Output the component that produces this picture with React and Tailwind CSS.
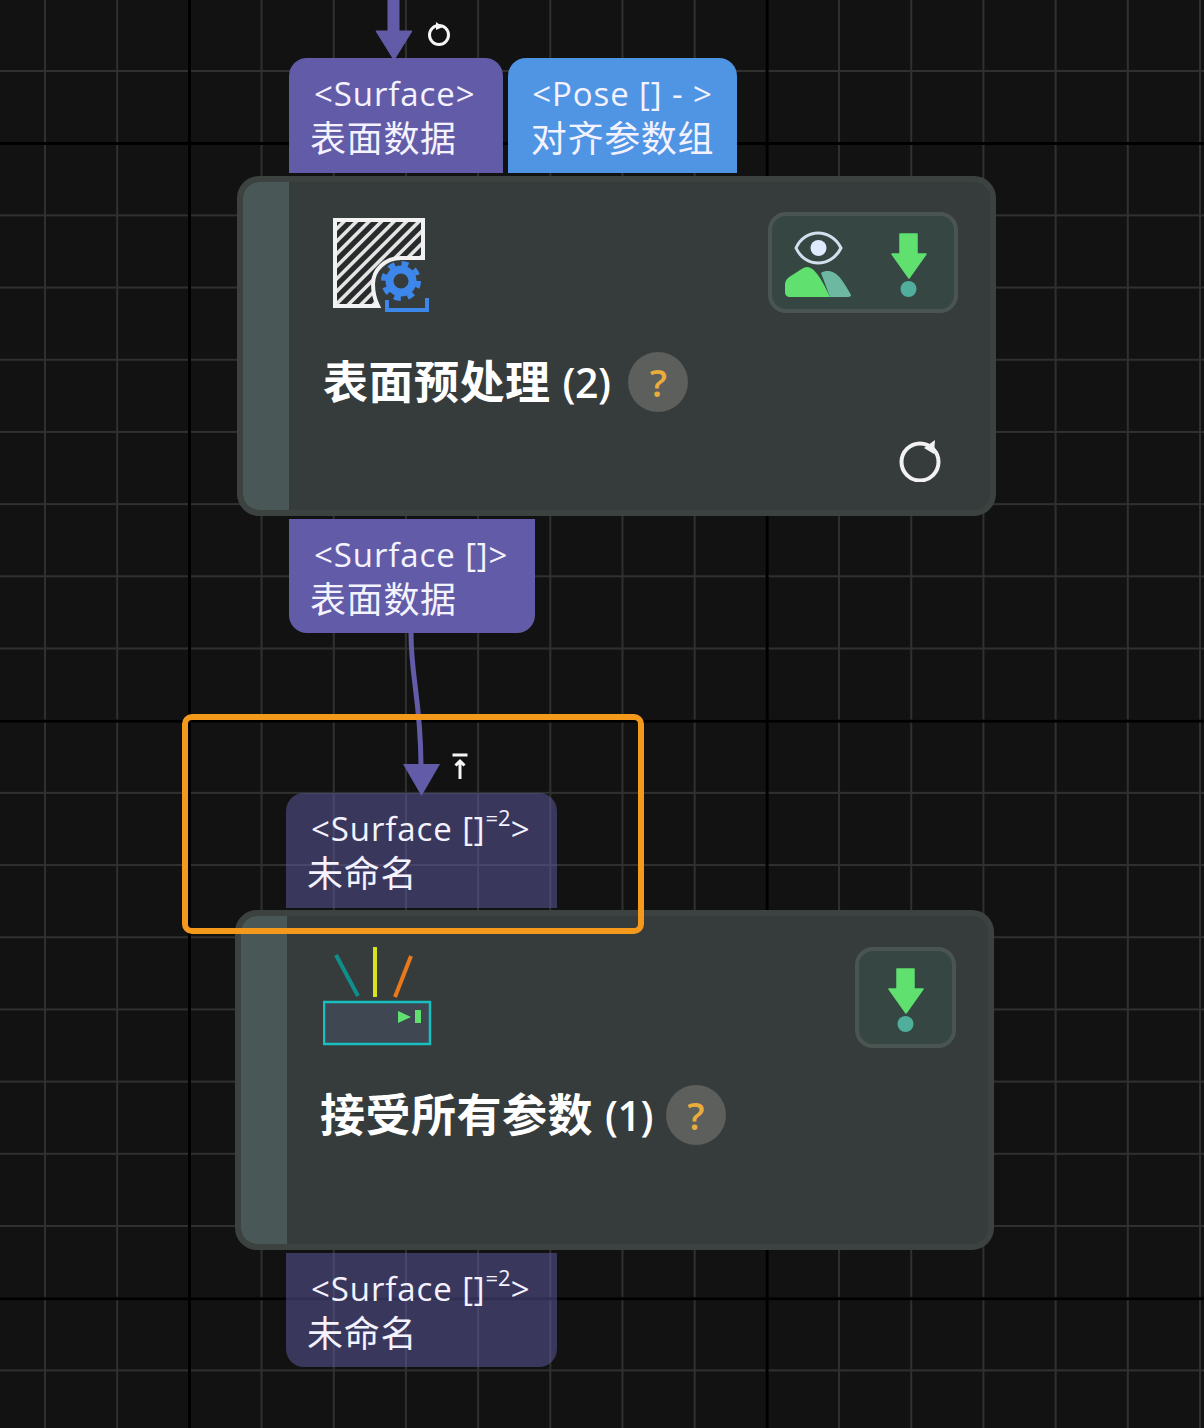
import React from 'react';

const FONT = "font-['Open_Sans','Noto_Sans_CJK_SC',sans-serif]";

function Port({ className, type, name, centered }) {
  return (
    <div className={`pt-[13px] text-[#f4f2ff] ${className}`}>
      <div className={`text-[33px] leading-[46px] tracking-[0.9px] whitespace-nowrap ${centered ? 'text-center' : 'pl-[25px]'}`}>{type}</div>
      <div className={`text-[36px] leading-[44px] tracking-[0.7px] whitespace-nowrap ${centered ? 'text-center' : 'pl-[21px]'}`}>{name}</div>
    </div>
  );
}

function Power() {
  return <sup className="relative top-[-15px] text-[22px] leading-none font-medium tracking-normal align-baseline">=2</sup>;
}

function DownArrow() {
  return (
    <svg width="36" height="70" viewBox="0 -6 36 70">
      <path d="M9 0H26V20H35L18 44L1 20H9Z" fill="#5fe06f" stroke="#5fe06f" strokeWidth="1.5" strokeLinejoin="round" />
      <circle cx="17.5" cy="55" r="8" fill="#4fae9c" />
    </svg>
  );
}

function EyePerson() {
  return (
    <svg width="66" height="71" viewBox="0 0 66 71">
      <path d="M11 21C20 1 46 1 56 21C46 41 20 41 11 21Z" fill="none" stroke="#d3deee" strokeWidth="3" />
      <circle cx="33.500" cy="21" r="8" fill="#dfeaff" />
      <path d="M36 46C42 42 50 44 56 52C60 57 63 63 66 68C66 69 65 70 63 70H45Z" fill="#6cb8a0" />
      <path d="M0 58C0 52 4 50 9 47C14 44 18 40 22 40C27 40 31 45 35 51C39 57 42 64 45 70H5C2 70 0 68 0 65Z" fill="#5fe06f" />
    </svg>
  );
}

function SurfaceIcon() {
  const outline = 'M2 2H90V40H68C52 40 40 52 40 66C40 74 42 82 45 88H2Z';
  const hatch = [];
  for (let i = -90; i < 110; i += 12.5) hatch.push(i);
  return (
    <svg width="100" height="96" viewBox="0 0 100 96" className="block">
      <defs>
        <clipPath id="hatch-clip">
          <path d={outline} />
        </clipPath>
      </defs>
      <path d={outline} fill="#282b2b" />
      <g clipPath="url(#hatch-clip)">
        {hatch.map((x) => (
          <line key={x} x1={x} y1="92" x2={x + 92} y2="0" stroke="#e4e4e4" strokeWidth="3.500" />
        ))}
      </g>
      <path d={outline} fill="none" stroke="#f2f2f2" strokeWidth="4" />
      <circle cx="68" cy="63" r="11.500" fill="none" stroke="#3d86ea" strokeWidth="8" />
      <circle cx="68" cy="63" r="17.500" fill="none" stroke="#3d86ea" strokeWidth="5" strokeDasharray="6.9 6.85" />
      <path d="M54 82V92H94V80" fill="none" stroke="#3d86ea" strokeWidth="4" />
    </svg>
  );
}

function RouterIcon() {
  return (
    <svg width="110" height="100" viewBox="0 0 110 100" className="block">
      <line x1="13" y1="8" x2="35" y2="49" stroke="#0f8f8c" strokeWidth="4" />
      <line x1="52" y1="0" x2="52" y2="50" stroke="#d8e21f" strokeWidth="4" />
      <line x1="88" y1="9" x2="72" y2="50" stroke="#e8791c" strokeWidth="4" />
      <rect x="1" y="55" width="106" height="42" fill="#3f4852" stroke="#18c0c0" strokeWidth="2.500" />
      <path d="M75 64L88 70L75 76Z" fill="#5fe06f" />
      <rect x="92" y="63" width="6" height="13" fill="#5fe06f" />
    </svg>
  );
}

function Reload() {
  return (
    <svg width="44" height="44" viewBox="0 0 44 44" className="block">
      <circle cx="21" cy="24" r="18.500" fill="none" stroke="#f2f2f2" strokeWidth="4" />
      <path d="M25 10L36 2L35 16Z" fill="#f2f2f2" />
    </svg>
  );
}

function Help({ gap }) {
  return (
    <div className={`flex h-[60px] w-[60px] items-center justify-center rounded-full bg-[#5c5f5c] text-[38px] leading-none font-semibold text-[#e9ac3d] ${gap}`}>?</div>
  );
}

function Card({ leftPad, topPad, icon, iconClass, title, count, helpGap, box, titleGap, children }) {
  return (
    <div className="flex h-[340px] w-[759px] overflow-hidden rounded-[22px] border-[6px] border-[#3b4240] bg-[#363b3b]">
      <div className="w-[46px] shrink-0 rounded-l-[16px] bg-[#495856]" />
      <div className={`flex flex-1 flex-col pr-[32px] ${leftPad} ${topPad}`}>
        <div className="flex items-start justify-between">
          <div className={iconClass}>{icon}</div>
          {box}
        </div>
        <div className={`flex items-center ${titleGap}`}>
          <span className="text-[45px] leading-[60px] font-bold tracking-[0.5px] whitespace-nowrap text-white">{title}</span>
          <span className="ml-[12px] text-[41px] leading-[60px] font-semibold tracking-[-0.5px] whitespace-nowrap text-white">({count})</span>
          <Help gap={helpGap} />
        </div>
        {children}
      </div>
    </div>
  );
}

export default function App() {
  return (
    <div
      className={`relative h-[1428px] w-[1204px] overflow-hidden bg-[#121212] ${FONT}
        [background-image:linear-gradient(to_right,#000_3px,transparent_3px),linear-gradient(to_bottom,#000_3px,transparent_3px),linear-gradient(to_right,#303030_2px,transparent_2px),linear-gradient(to_bottom,#303030_2px,transparent_2px)]
        [background-size:577.6px_577.6px,577.6px_577.6px,72.2px_72.2px,72.2px_72.2px]
        [background-position:188px_0,0_142px,44px_0,0_70px]`}
    >
      {/* node 1 */}
      <div className="absolute left-[237px] top-[58px] flex flex-col">
        <div className="ml-[52px] flex gap-[5px]">
          <Port className="h-[115px] w-[214px] rounded-t-[18px] bg-[#625ca8]" type="<Surface>" name="表面数据" />
          <Port className="h-[115px] w-[229px] rounded-t-[18px] bg-[#5095e4]" type="<Pose [] - >" name="对齐参数组" centered />
        </div>
        <div className="mt-[3px]">
          <Card
            leftPad="pl-[34px]"
            topPad="pt-[30px]"
            iconClass="ml-[10px] mt-[6px]"
            icon={<SurfaceIcon />}
            title="表面预处理"
            count="2"
            helpGap="ml-[18px]"
            titleGap="mt-[38px]"
            box={
              <div className="flex h-[101px] w-[190px] items-center gap-[40px] rounded-[18px] border-[4px] border-[#4a5552] bg-[#354643] pl-[13px]">
                <EyePerson />
                <DownArrow />
              </div>
            }
          >
            <div className="mt-[26px] flex justify-end pr-[15px]">
              <Reload />
            </div>
          </Card>
        </div>
        <Port className="ml-[52px] mt-[3px] h-[114px] w-[246px] rounded-b-[18px] bg-[#625ca8]" type="<Surface []>" name="表面数据" />
      </div>

      {/* node 2 */}
      <div className="absolute left-[235px] top-[793px] flex flex-col">
        <Port className="ml-[51px] h-[115px] w-[271px] rounded-t-[18px] bg-[#625ca8]/50" type={<>{'<Surface []'}<Power />{'>'}</>} name="未命名" />
        <div className="mt-[2px]">
          <Card
            leftPad="pl-[33px]"
            topPad="pt-[31px]"
            iconClass="ml-[3px]"
            icon={<RouterIcon />}
            title="接受所有参数"
            count="1"
            helpGap="ml-[13px]"
            titleGap="mt-[37px]"
            box={
              <div className="flex h-[101px] w-[101px] items-center justify-center rounded-[18px] border-[4px] border-[#4a5552] bg-[#354643]">
                <DownArrow />
              </div>
            }
          />
        </div>
        <Port className="ml-[51px] mt-[3px] h-[114px] w-[271px] rounded-b-[18px] bg-[#625ca8]/50" type={<>{'<Surface []'}<Power />{'>'}</>} name="未命名" />
      </div>

      {/* wires */}
      <svg className="absolute left-0 top-0" width="1204" height="1428" viewBox="0 0 1204 1428">
        <path d="M393.500 0V36" fill="none" stroke="#625ca8" strokeWidth="12" />
        <path d="M376 31H412L394 60Z" fill="#625ca8" stroke="#625ca8" strokeWidth="1" strokeLinejoin="round" />
        <path d="M411 633C411 680 421 700 421 768" fill="none" stroke="#625ca8" strokeWidth="5" />
        <path d="M403 764H440L421.500 796Z" fill="#625ca8" />
      </svg>

      {/* port badges */}
      <svg className="absolute left-[426px] top-[20px]" width="26" height="28" viewBox="0 0 26 28">
        <circle cx="13" cy="15" r="9.500" fill="none" stroke="#f6f6f6" strokeWidth="3" />
        <path d="M10 2L17 7L10 10Z" fill="#f6f6f6" />
      </svg>
      <svg className="absolute left-[450px] top-[752px]" width="20" height="30" viewBox="0 0 20 30">
        <path d="M2.500 3H17.500M10 9V27M5.500 13.500L10 9L14.500 13.500" fill="none" stroke="#f6f6f6" strokeWidth="3" />
      </svg>

      {/* selection */}
      <div className="absolute left-[182px] top-[714px] h-[220px] w-[462px] rounded-[10px] border-[6px] border-[#f39a1d]" />
    </div>
  );
}
